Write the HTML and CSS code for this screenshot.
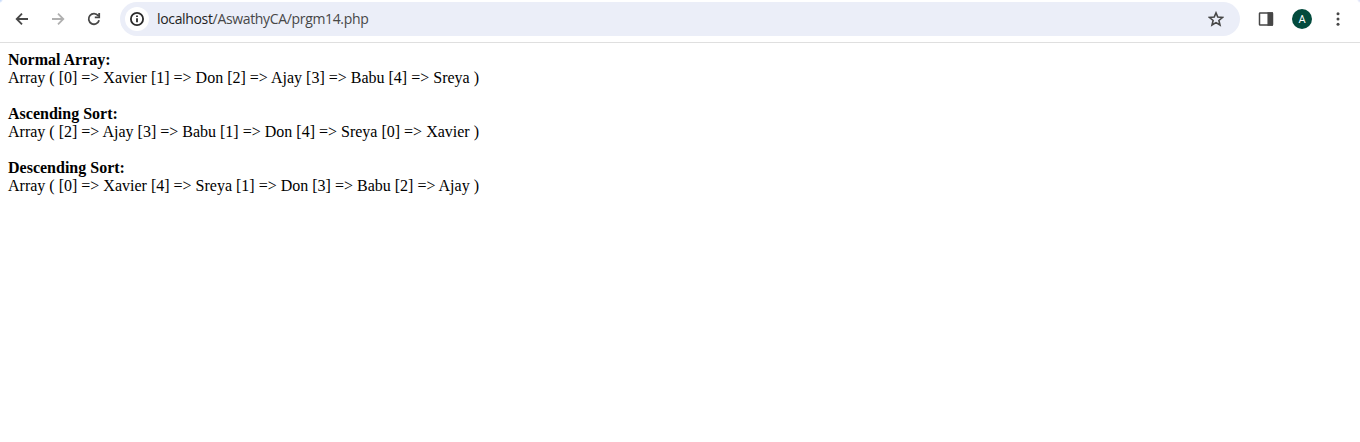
FILE: index.html
```html
<!DOCTYPE html>
<html lang="en">
<head>
<meta charset="utf-8">
<title>prgm14.php</title>
<link rel="stylesheet" href="styles.css">
</head>
<body>
<header class="toolbar">
  <div class="nav">
    <svg class="icon" viewBox="0 0 16 16"><path d="M14 8H3M8 2.7L2.7 8L8 13.3"/></svg>
    <svg class="icon icon-disabled" viewBox="0 0 16 16"><path d="M2 8H13M8 2.7L13.3 8L8 13.3"/></svg>
    <svg class="icon" viewBox="0 0 16 16"><path d="M12.2 4.7A5.3 5.3 0 1 0 13.1 9.3M13.2 2V6.3H8.8"/></svg>
  </div>
  <div class="omnibox">
    <span class="site-info"><svg class="icon" viewBox="0 0 16 16"><circle cx="8" cy="8" r="6.1"/><path d="M8 7.2V11.2M8 4.6V6.1"/></svg></span>
    <span class="url"><span class="host">localhost</span>/AswathyCA/prgm14.php</span>
    <svg class="icon star" viewBox="0 0 16 16"><path d="M8 1.9L9.8 6.1L14.4 6.5L10.9 9.5L12 14L8 11.6L4 14L5.1 9.5L1.6 6.5L6.2 6.1Z"/></svg>
  </div>
  <div class="actions">
    <svg class="icon panel" viewBox="0 0 16 16"><rect x="1.5" y="1.9" width="13" height="12.2" rx="0.6"/><path class="solid" d="M10.2 2H14.2V14H10.2Z"/></svg>
    <span class="avatar">A</span>
    <svg class="icon dots" viewBox="0 0 16 16"><circle cx="8" cy="2.7" r="1.5"/><circle cx="8" cy="8" r="1.5"/><circle cx="8" cy="13.3" r="1.5"/></svg>
  </div>
</header>
<main class="output">
<b>Normal Array:</b><br>Array ( [0] =&gt; Xavier [1] =&gt; Don [2] =&gt; Ajay [3] =&gt; Babu [4] =&gt; Sreya )<br><br>
<b>Ascending Sort:</b><br>Array ( [2] =&gt; Ajay [3] =&gt; Babu [1] =&gt; Don [4] =&gt; Sreya [0] =&gt; Xavier )<br><br>
<b>Descending Sort:</b><br>Array ( [0] =&gt; Xavier [4] =&gt; Sreya [1] =&gt; Don [3] =&gt; Babu [2] =&gt; Ajay )
</main>
</body>
</html>
```
FILE: styles.css
```css
body {
  margin: 0;
  background: #fff;
  color: #000;
}
.toolbar {
  box-sizing: border-box;
  height: 43px;
  padding: 2px 14px 0;
  display: flex;
  align-items: flex-start;
  border-bottom: 1px solid #dfdfdf;
  background:
    radial-gradient(circle at 0 0, #c9dcfa 1px, transparent 3px),
    radial-gradient(circle at 100% 0, #dfe3f8 1px, transparent 3px);
}
.nav, .actions {
  display: flex;
  align-items: center;
  height: 34px;
  gap: 20px;
}
.nav {
  width: 106px;
}
.icon {
  display: block;
  flex: none;
  width: 16px;
  height: 16px;
  fill: none;
  stroke: #474747;
  stroke-width: 1.8;
}
.icon-disabled {
  stroke: #b0b0b0;
}
.omnibox {
  box-sizing: border-box;
  width: 1120px;
  height: 34px;
  padding: 0 16px 0 5px;
  border-radius: 17px;
  background: #ebeef8;
  display: flex;
  align-items: center;
}
.site-info {
  width: 24px;
  height: 24px;
  border-radius: 50%;
  background: #fff;
  display: grid;
  place-items: center;
}
.site-info .icon {
  stroke: #2b2b2b;
}
.url {
  flex: 1;
  margin-left: 8px;
  font: 14px/20px "Open Sans", "Noto Sans", sans-serif;
  letter-spacing: -0.34px;
  color: #474747;
}
.host {
  color: #1f1f1f;
}
.star {
  stroke-width: 1.6;
}
.panel {
  stroke-width: 1.5;
}
.actions {
  margin-left: 18px;
}
.actions .solid, .dots {
  fill: #474747;
}
.dots {
  stroke: none;
}
.avatar {
  width: 20px;
  height: 20px;
  margin: 0 -2px;
  border-radius: 50%;
  background: #034b3d;
  color: #fff;
  font: 11px/21px Roboto, sans-serif;
  text-align: center;
}
.output {
  padding: 8px;
  font: 16px/18px "Liberation Serif", "Times New Roman", serif;
}
```
